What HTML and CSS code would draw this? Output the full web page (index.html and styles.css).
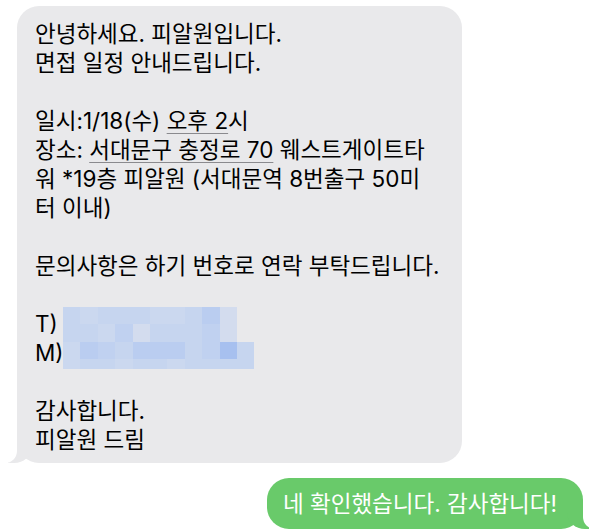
FILE: index.html
```html
<!DOCTYPE html>
<html lang="ko">
<head>
  <meta charset="UTF-8">
  <meta name="viewport" content="width=device-width, initial-scale=1.0">
  <title>메시지</title>
  <link rel="stylesheet" href="styles.css">
</head>
<body>

  <!-- Conversation -->
  <main class="thread">

    <!-- Received message -->
    <div class="bubble received">
      <p>안녕하세요. 피알원입니다.<br>면접 일정 안내드립니다.</p>
      <p>일시:1/18(수) <span class="link">오후 2</span>시<br>장소: <span class="link">서대문구 충정로 70</span> 웨스트게이트타<br>워 *19층 피알원 (서대문역 8번출구 50미<br>터 이내)</p>
      <p>문의사항은 하기 번호로 연락 부탁드립니다.</p>
      <div class="contact">
        <p>T)<br>M)</p>
        <div class="mosaic" aria-hidden="true">
          <span class="c3"></span><span class="c4"></span><span class="c3"></span><span class="c3"></span><span class="c3"></span><span class="c4"></span><span class="c4"></span><span class="c3"></span><span class="c1"></span><span class="c5"></span><span class="c0"></span>
          <span class="c3"></span><span class="c3"></span><span class="c4"></span><span class="c2"></span><span class="c5"></span><span class="c3"></span><span class="c3"></span><span class="c3"></span><span class="c2"></span><span class="c5"></span><span class="c0"></span>
          <span class="c4"></span><span class="c1"></span><span class="c2"></span><span class="c3"></span><span class="c1"></span><span class="c1"></span><span class="c1"></span><span class="c3"></span><span class="c2"></span><span class="cd"></span><span class="c3"></span>
          <span class="c4"></span><span class="c3"></span><span class="c3"></span><span class="c4"></span><span class="c3"></span><span class="c3"></span><span class="c4"></span><span class="c3"></span><span class="c3"></span><span class="c3"></span><span class="c3"></span>
        </div>
      </div>
      <p>감사합니다.<br>피알원 드림</p>
    </div>

    <!-- Sent message -->
    <div class="bubble sent">
      <p>네 확인했습니다. 감사합니다!</p>
    </div>

  </main>

</body>
</html>
```

FILE: styles.css
```css
/* Global Styles */
body {
  margin: 0;
  padding: 0;
  background-color: #fff;
  font-family: Inter, "Noto Sans CJK KR", sans-serif;
  font-size: 22.5px;
  line-height: 29px;
  color: #000;
}

.thread {
  display: flex;
  flex-direction: column;
  gap: 15px;
  padding: 6px 17px 0 17px;
}

/* Bubbles */
.bubble {
  position: relative;
  border-radius: 22px;
}

.bubble p {
  margin: 0 0 29px 0;
}

.bubble p:last-child {
  margin-bottom: 0;
}

.received {
  align-self: flex-start;
  width: 445px;
  box-sizing: border-box;
  padding: 13px 18px 9px 18px;
  background-color: #e9e9eb;
}

.sent {
  align-self: flex-end;
  padding: 11px 26px 11px 16px;
  background-color: #69ca6a;
  color: #fff;
}

/* Bubble tails */
.bubble::before,
.bubble::after {
  content: "";
  position: absolute;
  bottom: 0;
  height: 22px;
}

.received::before {
  left: -9px;
  width: 24px;
  background-color: #e9e9eb;
  border-bottom-right-radius: 18px 16px;
}

.received::after {
  left: -26px;
  width: 26px;
  background-color: #fff;
  border-bottom-right-radius: 12px;
}

.sent::before {
  right: -6px;
  width: 22px;
  background-color: #69ca6a;
  border-bottom-left-radius: 18px 16px;
}

.sent::after {
  right: -26px;
  width: 26px;
  background-color: #fff;
  border-bottom-left-radius: 12px;
}

.link {
  text-decoration: underline;
  text-decoration-color: #8a8a8e;
  text-decoration-thickness: 1px;
  text-underline-offset: 4px;
}

/* Redacted phone numbers */
.contact {
  position: relative;
  margin-bottom: 29px;
}

.mosaic {
  position: absolute;
  left: 28px;
  top: -2px;
  display: grid;
  grid-template-columns: repeat(11, 17.4px);
  grid-auto-rows: 17.4px;
}

.mosaic span:nth-child(n+34) {
  height: 10px;
}

.mosaic .c0 { background-color: transparent; }
.mosaic .c1 { background-color: #bacdf0; }
.mosaic .c2 { background-color: #c0d1f0; }
.mosaic .c3 { background-color: #c6d5ef; }
.mosaic .c4 { background-color: #cbd8ef; }
.mosaic .c5 { background-color: #d3dcee; }
.mosaic .cd { background-color: #a7c0ef; }
```
